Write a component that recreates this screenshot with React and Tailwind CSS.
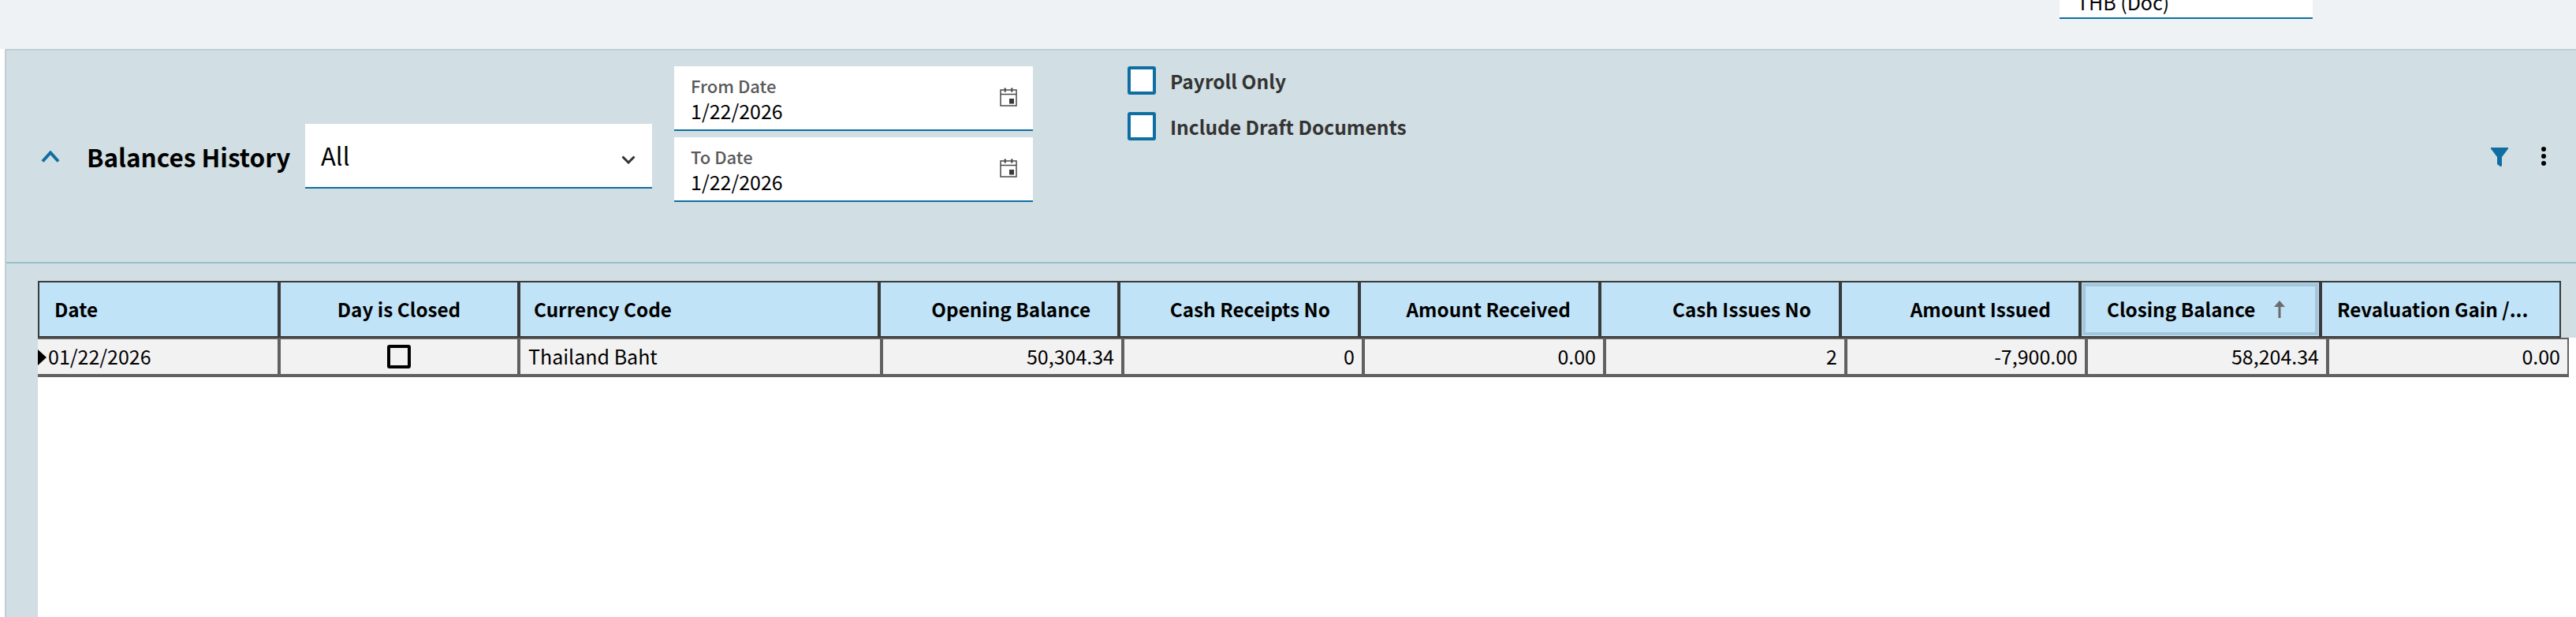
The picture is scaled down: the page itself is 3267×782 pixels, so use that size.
import React from "react";

const headers = [
  { label: "Date", w: "w-[306px]", cls: "justify-start pl-[19px]" },
  { label: "Day is Closed", w: "w-[304px]", cls: "justify-center" },
  { label: "Currency Code", w: "w-[457px]", cls: "justify-start pl-[17px]" },
  { label: "Opening Balance", w: "w-[304px]", cls: "justify-end pr-[34px]" },
  { label: "Cash Receipts No", w: "w-[305px]", cls: "justify-end pr-[35px]" },
  { label: "Amount Received", w: "w-[305px]", cls: "justify-end pr-[35px]" },
  { label: "Cash Issues No", w: "w-[305px]", cls: "justify-end pr-[35px]" },
  { label: "Amount Issued", w: "w-[304px]", cls: "justify-end pr-[35px]" },
];

const cells = [
  { w: "w-[306px]" },
  { w: "w-[304px]", center: true },
  { w: "w-[460px]", text: "Thailand Baht", left: true },
  { w: "w-[306px]", text: "50,304.34" },
  { w: "w-[305px]", text: "0" },
  { w: "w-[306px]", text: "0.00" },
  { w: "w-[306px]", text: "2" },
  { w: "w-[305px]", text: "-7,900.00" },
  { w: "w-[306px]", text: "58,204.34" },
  { w: "w-[306px]", text: "0.00" },
];

function CalendarIcon() {
  return (
    <svg width="22" height="24" viewBox="0 0 22 24" fill="none" className="shrink-0">
      <rect x="1" y="3" width="20" height="20" stroke="#4a4a4a" strokeWidth="1.5" />
      <path d="M1 8.5H21" stroke="#4a4a4a" strokeWidth="1.5" />
      <rect x="5.5" y="0.5" width="2.5" height="5" fill="#555" />
      <rect x="14" y="0.5" width="2.5" height="5" fill="#555" />
      <rect x="12" y="14" width="6" height="6.5" fill="#3a3a3a" />
    </svg>
  );
}

function DateField({ label }) {
  return (
    <div className="relative h-[82px] w-[455px] bg-white border-b-2 border-[#0f6ea1] pl-[21px] pt-[11px]">
      <div className="text-[22px] leading-[26px] font-medium text-[#595959]">{label}</div>
      <div className="text-[25px] leading-[32px] text-black mt-[3px]">1/22/2026</div>
      <div className="absolute right-[20px] top-[27px]">
        <CalendarIcon />
      </div>
    </div>
  );
}

function Check({ label }) {
  return (
    <div className="flex items-center h-[36px]">
      <div className="w-[36px] h-[36px] rounded-[3px] border-[4px] border-[#0f6ea1] bg-white shrink-0" />
      <span className="ml-[18px] text-[24.5px] leading-[36px] font-semibold text-[#333] mt-[2px]">{label}</span>
    </div>
  );
}

export default function App() {
  return (
    <div className="w-[3267px] h-[782px] overflow-hidden bg-white [font-family:'Noto_Sans_CJK_SC','Noto_Sans',sans-serif]">
      <div className="h-[62px] bg-[#eef2f5] flex justify-end items-start pr-[334px]">
        <div className="w-[321px] h-[24px] bg-white border-b-2 border-[#0f6ea1] pl-[22px] overflow-hidden flex items-end">
          <span className="text-[25px] leading-[30px] text-black mb-[5px] whitespace-nowrap">THB (Doc)</span>
        </div>
      </div>

      <div className="ml-[6px] h-[720px] border-l-2 border-t-2 border-[#c1ced2] bg-[#d1dee3] flex flex-col">
        <div className="h-[270px] shrink-0 border-b-2 border-[#97c0cb] flex items-center relative">
          <svg width="24" height="15" viewBox="0 0 24 15" fill="none" className="ml-[44px] shrink-0">
            <path d="M2 13.5L12 2.5L22 13.5" stroke="#0f6ea1" strokeWidth="4" />
          </svg>
          <h2 className="ml-[34px] w-[277px] text-[31.5px] leading-[40px] font-semibold text-black whitespace-nowrap">Balances History</h2>
          <div className="w-[440px] h-[82px] bg-white border-b-2 border-[#0f6ea1] flex items-start justify-between pl-[20px] pr-[21px] pt-[20px] shrink-0">
            <span className="text-[31px] leading-[40px] text-black">All</span>
            <svg width="18" height="11" viewBox="0 0 18 11" fill="none" className="mt-[20px]">
              <path d="M1.5 1.5L9 9L16.5 1.5" stroke="#333" strokeWidth="3" />
            </svg>
          </div>
          <div className="ml-[28px] self-start mt-[20px] flex flex-col gap-[8px] shrink-0">
            <DateField label="From Date" />
            <DateField label="To Date" />
          </div>
          <div className="ml-[120px] self-start mt-[20px] flex flex-col gap-[22px]">
            <Check label="Payroll Only" />
            <Check label="Include Draft Documents" />
          </div>
          <div className="ml-auto flex items-center mr-[37px] gap-[41px]">
            <svg width="22" height="24" viewBox="0 0 22 24" className="mt-[1px]">
              <path d="M0 0H22V1.5L14 12V22L13.5 24H12L8 21V12L0 1.5Z" fill="#0f6ea1" />
            </svg>
            <svg width="8" height="26" viewBox="0 0 8 26">
              <circle cx="4" cy="4" r="3" fill="#000" />
              <circle cx="4" cy="13" r="3" fill="#000" />
              <circle cx="4" cy="22" r="3" fill="#000" />
            </svg>
          </div>
        </div>

        <div className="flex-1 pl-[40px] flex flex-col">
          <div className="pt-[22px] flex text-[24.3px] font-semibold text-black">
            {headers.map((h) => (
              <div key={h.label} className={`${h.w} h-[72px] shrink-0 border-2 border-[#3a3a3a] bg-[#c0e3f7] flex items-center ${h.cls}`}>
                {h.label}
              </div>
            ))}
            <div className="w-[305px] h-[72px] shrink-0 border-2 border-[#3a3a3a] bg-[#c0e3f7] p-[1px]">
              <div className="h-full border-[4px] border-[#a5c6da] flex items-center pl-[27px]">
                <span>Closing Balance</span>
                <svg width="14" height="22" viewBox="0 0 14 22" className="ml-[24px]">
                  <path d="M7 0L14 8H8.5V22H5.5V8H0Z" fill="#6b6b6b" />
                </svg>
              </div>
            </div>
            <div className="w-[305px] h-[72px] shrink-0 border-2 border-[#3a3a3a] bg-[#c0e3f7] flex items-center pl-[19px]">
              Revaluation Gain /...
            </div>
          </div>

          <div className="flex-1 bg-white">
            <div className="flex h-[50px] w-[3210px] text-[25px] text-black border-t-2 border-b-4 border-[#616161] bg-[#f2f2f2] relative">
              <div className="absolute left-0 top-[13px] w-0 h-0 border-y-[10px] border-y-transparent border-l-[11px] border-l-black" />
              {cells.map((c, i) => (
                <div
                  key={i}
                  className={`${c.w} shrink-0 ${i === 0 ? "" : "border-l-2"} border-r-2 border-[#616161] flex items-center ${c.left ? "justify-start pl-[10px]" : c.center ? "justify-center" : "justify-end pr-[9px]"}`}
                >
                  {c.text}
                  {i === 0 && <span className="mr-auto ml-[13px]">01/22/2026</span>}
                  {i === 1 && <span className="w-[30px] h-[30px] rounded-[3px] border-[4px] border-black" />}
                </div>
              ))}
            </div>
          </div>
        </div>
      </div>
    </div>
  );
}
